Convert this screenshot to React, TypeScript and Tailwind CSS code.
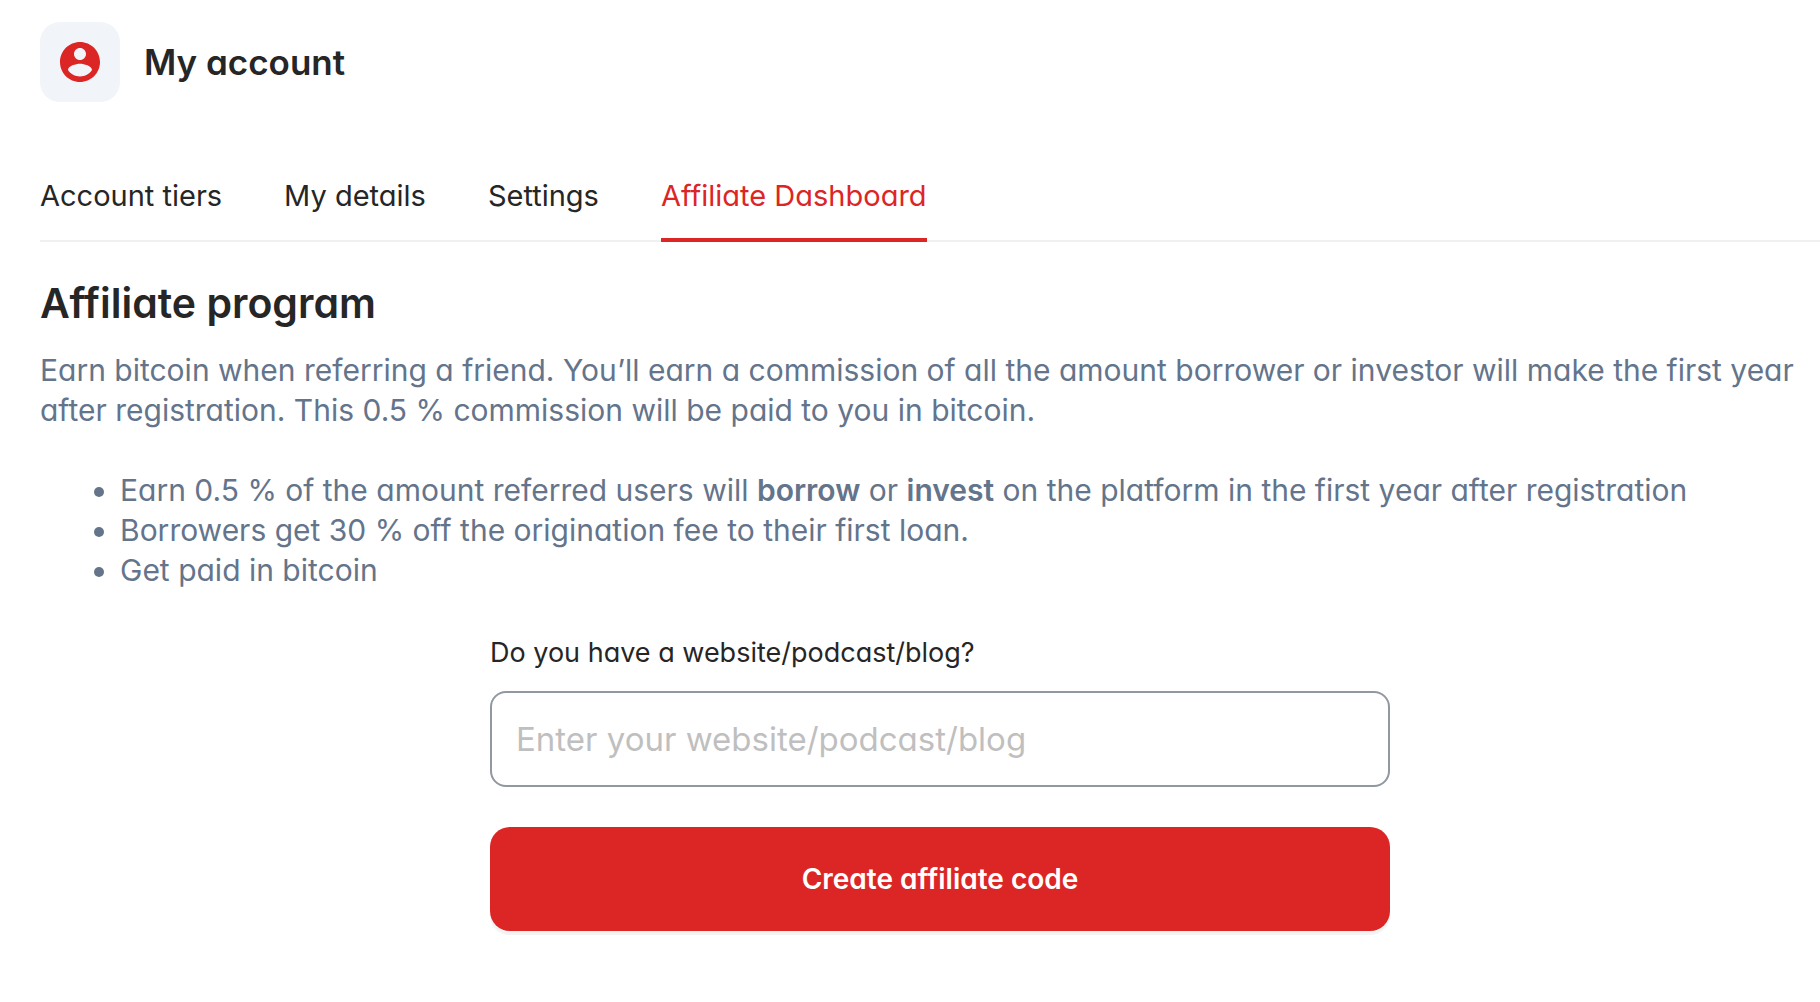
const tabs = ["Account tiers", "My details", "Settings", "Affiliate Dashboard"];

function AccountIcon() {
  return (
    <svg viewBox="0 0 24 24" className="size-12 fill-[#dc2626]" aria-hidden="true">
      <path d="M12 2C6.48 2 2 6.48 2 12s4.48 10 10 10 10-4.48 10-10S17.52 2 12 2zm0 3c1.66 0 3 1.34 3 3s-1.34 3-3 3-3-1.34-3-3 1.34-3 3-3zm0 14.2c-2.5 0-4.71-1.28-6-3.22.03-1.99 4-3.08 6-3.08 1.99 0 5.97 1.09 6 3.08-1.29 1.94-3.5 3.22-6 3.22z" />
    </svg>
  );
}

export default function App() {
  return (
    <main className="min-h-screen bg-white pt-[22px] pb-12 pl-10 font-['Inter',sans-serif] text-[#262626] [font-feature-settings:'cv11','liga'_0,'calt'_0]">
      <header className="flex items-center gap-6">
        <span className="flex size-20 items-center justify-center rounded-[20px] bg-[#f1f5f9]">
          <AccountIcon />
        </span>
        <h1 className="text-[35px] leading-10 font-semibold">My account</h1>
      </header>

      <nav className="mt-[70px] flex gap-[62px] border-b-2 border-[#f0f0f0]" aria-label="Account">
        {tabs.map((tab) =>
          tab === "Affiliate Dashboard" ? (
            <a
              key={tab}
              href="#"
              aria-current="page"
              className="-mb-0.5 border-b-4 border-[#dc2626] pt-1 pb-[22px] text-[29px] leading-10 text-[#dc2626]"
            >
              {tab}
            </a>
          ) : (
            <a key={tab} href="#" className="pt-1 pb-6 text-[29px] leading-10">
              {tab}
            </a>
          ),
        )}
      </nav>

      <section className="pt-9">
        <h2 className="text-[41px] leading-[50px] font-semibold">Affiliate program</h2>
        <div className="mt-[22px] pr-5 text-[30px] leading-10 text-[#64748b]">
          <p>
            Earn bitcoin when referring a friend. You’ll earn a commission of all the amount borrower or investor will
            make the first year after registration. This 0.5 % commission will be paid to you in bitcoin.
          </p>
          <ul className="mt-10 list-disc pl-20">
            <li>
              Earn 0.5 % of the amount referred users will <strong className="font-semibold">borrow</strong> or{" "}
              <strong className="font-semibold">invest</strong> on the platform in the first year after registration
            </li>
            <li>Borrowers get 30 % off the origination fee to their first loan.</li>
            <li>Get paid in bitcoin</li>
          </ul>
        </div>
      </section>

      <form className="mt-[43px] pl-5" onSubmit={(e) => e.preventDefault()}>
        <div className="mx-auto flex max-w-[900px] flex-col">
          <label htmlFor="website" className="text-[27px] leading-10">
            Do you have a website/podcast/blog?
          </label>
          <input
            id="website"
            type="text"
            placeholder="Enter your website/podcast/blog"
            className="mt-[18px] h-24 w-full rounded-2xl border-2 border-[#91989f] px-6 text-[33px] outline-none placeholder:text-[#bfbfbf]"
          />
          <button
            type="submit"
            className="mt-10 h-[104px] w-full rounded-[20px] bg-[#dc2626] text-[28px] font-semibold text-white shadow-[0_4px_0_#f3f3f4]"
          >
            Create affiliate code
          </button>
        </div>
      </form>
    </main>
  );
}
